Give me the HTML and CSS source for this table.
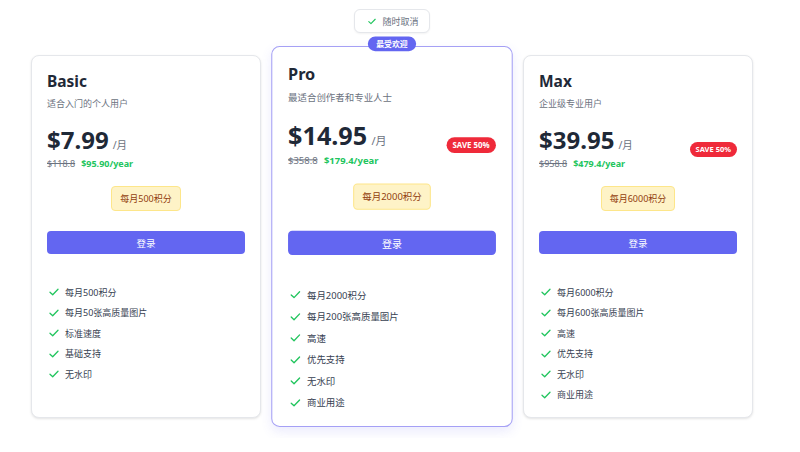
FILE: index.html
```html
<!DOCTYPE html>
<html lang="zh">
<head>
<meta charset="utf-8">
<link rel="stylesheet" href="styles.css">
</head>
<body>
<div class="page">
  <div class="top">
    <div class="cancel-pill">
      <svg class="chk" viewBox="0 0 10 8" width="8" height="7"><path d="M1 4.2 L3.7 6.7 L9 1.2" fill="none" stroke="#22c55e" stroke-width="1.4" stroke-linecap="round" stroke-linejoin="round"/></svg>
      <span>随时取消</span>
    </div>
  </div>
  <div class="plans">
    <div class="card">
      <div class="title">Basic</div>
      <div class="sub">适合入门的个人用户</div>
      <div class="price-row">
        <div class="price-block">
          <div class="price"><span class="amount">$7.99</span><span class="per">/月</span></div>
          <div class="yearly"><s>$118.8</s><span class="year">$95.90/year</span></div>
        </div>
      </div>
      <div class="credits-wrap"><span class="credits">每月500积分</span></div>
      <button class="btn">登录</button>
      <ul class="features">
        <li><svg class="chk" viewBox="0 0 10 8" width="10" height="8"><path d="M1 4.2 L3.7 6.7 L9 1.2" fill="none" stroke="#22c55e" stroke-width="1.3" stroke-linecap="round" stroke-linejoin="round"/></svg>每月500积分</li>
        <li><svg class="chk" viewBox="0 0 10 8" width="10" height="8"><path d="M1 4.2 L3.7 6.7 L9 1.2" fill="none" stroke="#22c55e" stroke-width="1.3" stroke-linecap="round" stroke-linejoin="round"/></svg>每月50张高质量图片</li>
        <li><svg class="chk" viewBox="0 0 10 8" width="10" height="8"><path d="M1 4.2 L3.7 6.7 L9 1.2" fill="none" stroke="#22c55e" stroke-width="1.3" stroke-linecap="round" stroke-linejoin="round"/></svg>标准速度</li>
        <li><svg class="chk" viewBox="0 0 10 8" width="10" height="8"><path d="M1 4.2 L3.7 6.7 L9 1.2" fill="none" stroke="#22c55e" stroke-width="1.3" stroke-linecap="round" stroke-linejoin="round"/></svg>基础支持</li>
        <li><svg class="chk" viewBox="0 0 10 8" width="10" height="8"><path d="M1 4.2 L3.7 6.7 L9 1.2" fill="none" stroke="#22c55e" stroke-width="1.3" stroke-linecap="round" stroke-linejoin="round"/></svg>无水印</li>
      </ul>
    </div>
    <div class="card pro">
      <div class="popular">最受欢迎</div>
      <div class="title">Pro</div>
      <div class="sub">最适合创作者和专业人士</div>
      <div class="price-row">
        <div class="price-block">
          <div class="price"><span class="amount">$14.95</span><span class="per">/月</span></div>
          <div class="yearly"><s>$358.8</s><span class="year">$179.4/year</span></div>
        </div>
        <span class="save">SAVE 50%</span>
      </div>
      <div class="credits-wrap"><span class="credits">每月2000积分</span></div>
      <button class="btn">登录</button>
      <ul class="features">
        <li><svg class="chk" viewBox="0 0 10 8" width="10" height="8"><path d="M1 4.2 L3.7 6.7 L9 1.2" fill="none" stroke="#22c55e" stroke-width="1.3" stroke-linecap="round" stroke-linejoin="round"/></svg>每月2000积分</li>
        <li><svg class="chk" viewBox="0 0 10 8" width="10" height="8"><path d="M1 4.2 L3.7 6.7 L9 1.2" fill="none" stroke="#22c55e" stroke-width="1.3" stroke-linecap="round" stroke-linejoin="round"/></svg>每月200张高质量图片</li>
        <li><svg class="chk" viewBox="0 0 10 8" width="10" height="8"><path d="M1 4.2 L3.7 6.7 L9 1.2" fill="none" stroke="#22c55e" stroke-width="1.3" stroke-linecap="round" stroke-linejoin="round"/></svg>高速</li>
        <li><svg class="chk" viewBox="0 0 10 8" width="10" height="8"><path d="M1 4.2 L3.7 6.7 L9 1.2" fill="none" stroke="#22c55e" stroke-width="1.3" stroke-linecap="round" stroke-linejoin="round"/></svg>优先支持</li>
        <li><svg class="chk" viewBox="0 0 10 8" width="10" height="8"><path d="M1 4.2 L3.7 6.7 L9 1.2" fill="none" stroke="#22c55e" stroke-width="1.3" stroke-linecap="round" stroke-linejoin="round"/></svg>无水印</li>
        <li><svg class="chk" viewBox="0 0 10 8" width="10" height="8"><path d="M1 4.2 L3.7 6.7 L9 1.2" fill="none" stroke="#22c55e" stroke-width="1.3" stroke-linecap="round" stroke-linejoin="round"/></svg>商业用途</li>
      </ul>
    </div>
    <div class="card">
      <div class="title">Max</div>
      <div class="sub">企业级专业用户</div>
      <div class="price-row">
        <div class="price-block">
          <div class="price"><span class="amount">$39.95</span><span class="per">/月</span></div>
          <div class="yearly"><s>$958.8</s><span class="year">$479.4/year</span></div>
        </div>
        <span class="save">SAVE 50%</span>
      </div>
      <div class="credits-wrap"><span class="credits">每月6000积分</span></div>
      <button class="btn">登录</button>
      <ul class="features">
        <li><svg class="chk" viewBox="0 0 10 8" width="10" height="8"><path d="M1 4.2 L3.7 6.7 L9 1.2" fill="none" stroke="#22c55e" stroke-width="1.3" stroke-linecap="round" stroke-linejoin="round"/></svg>每月6000积分</li>
        <li><svg class="chk" viewBox="0 0 10 8" width="10" height="8"><path d="M1 4.2 L3.7 6.7 L9 1.2" fill="none" stroke="#22c55e" stroke-width="1.3" stroke-linecap="round" stroke-linejoin="round"/></svg>每月600张高质量图片</li>
        <li><svg class="chk" viewBox="0 0 10 8" width="10" height="8"><path d="M1 4.2 L3.7 6.7 L9 1.2" fill="none" stroke="#22c55e" stroke-width="1.3" stroke-linecap="round" stroke-linejoin="round"/></svg>高速</li>
        <li><svg class="chk" viewBox="0 0 10 8" width="10" height="8"><path d="M1 4.2 L3.7 6.7 L9 1.2" fill="none" stroke="#22c55e" stroke-width="1.3" stroke-linecap="round" stroke-linejoin="round"/></svg>优先支持</li>
        <li><svg class="chk" viewBox="0 0 10 8" width="10" height="8"><path d="M1 4.2 L3.7 6.7 L9 1.2" fill="none" stroke="#22c55e" stroke-width="1.3" stroke-linecap="round" stroke-linejoin="round"/></svg>无水印</li>
        <li><svg class="chk" viewBox="0 0 10 8" width="10" height="8"><path d="M1 4.2 L3.7 6.7 L9 1.2" fill="none" stroke="#22c55e" stroke-width="1.3" stroke-linecap="round" stroke-linejoin="round"/></svg>商业用途</li>
      </ul>
    </div>
  </div>
</div>
</body>
</html>
```
FILE: styles.css
```css
* { box-sizing: border-box; }
html, body { margin: 0; padding: 0; background: #ffffff; }
body {
  font-family: "Noto Sans", "Noto Sans CJK SC", sans-serif;
  color: #1f2937;
}
.page {
  width: 784px;
  padding-top: 9px;
  padding-bottom: 20px;
}
.top {
  display: flex;
  justify-content: center;
}
.cancel-pill {
  display: flex;
  align-items: center;
  gap: 6px;
  height: 24px;
  padding: 0 10px 0 13px;
  border: 1px solid #e5e7eb;
  border-radius: 6px;
  background: #fff;
  box-shadow: 0 1px 2px rgba(0,0,0,0.05);
  font-size: 9px;
  color: #6b7280;
}
.plans {
  display: grid;
  grid-template-columns: repeat(3, 230px);
  gap: 16px;
  justify-content: center;
  margin-top: 22px;
}
.card {
  position: relative;
  height: 363px;
  border: 1px solid #e5e7eb;
  border-radius: 8px;
  background: #fff;
  box-shadow: 0 1px 3px rgba(0,0,0,0.08), 0 1px 2px rgba(0,0,0,0.04);
  padding: 15px 15px 16px 15px;
}
.card.pro {
  transform: scale(1.05);
  border: 1.4px solid #a5a0f5;
  box-shadow: 0 4px 10px rgba(99,102,241,0.12);
  z-index: 1;
}
.popular {
  position: absolute;
  top: -10px;
  left: 50%;
  transform: translateX(-50%);
  height: 14px;
  padding: 0 8px;
  border-radius: 7px;
  background: #6366f1;
  color: #fff;
  font-size: 7.5px;
  font-weight: 700;
  line-height: 14px;
  white-space: nowrap;
}
.title {
  font-size: 15.5px;
  font-weight: 700;
  line-height: 20px;
  color: #1f2937;
}
.sub {
  margin-top: 6px;
  font-size: 9px;
  line-height: 14px;
  color: #6b7280;
}
.price-row {
  margin-top: 17px;
  display: flex;
  justify-content: space-between;
  align-items: center;
}
.price {
  display: flex;
  align-items: baseline;
  gap: 4px;
}
.amount {
  font-size: 24px;
  font-weight: 700;
  line-height: 24px;
  color: #1f2937;
}
.per {
  font-size: 10.5px;
  color: #6b7280;
}
.yearly {
  display: flex;
  gap: 6px;
  margin-top: 6px;
  font-size: 9px;
  line-height: 12px;
}
.yearly s {
  color: #6b7280;
}
.year {
  color: #22c55e;
  font-weight: 700;
}
.save {
  background: #ef2a3a;
  color: #fff;
  font-size: 7.5px;
  font-weight: 700;
  height: 15px;
  line-height: 15px;
  padding: 0 6px;
  border-radius: 8px;
}
.credits-wrap {
  display: flex;
  justify-content: center;
  margin-top: 16px;
}
.credits {
  display: inline-block;
  height: 25px;
  line-height: 23px;
  padding: 0 8px;
  border: 1px solid #fde68a;
  border-radius: 4px;
  background: #fef3c7;
  color: #92400e;
  font-size: 9px;
}
.btn {
  display: block;
  width: 100%;
  height: 23px;
  margin-top: 20px;
  border: none;
  border-radius: 4px;
  background: #6366f1;
  color: #fff;
  font-family: inherit;
  font-size: 9.5px;
}
.features {
  list-style: none;
  margin: 28px 0 0 0;
  padding: 0 0 0 2px;
}
.features li {
  display: flex;
  align-items: center;
  gap: 6px;
  height: 20.5px;
  font-size: 9px;
  color: #374151;
}
.chk { flex: none; }
```
